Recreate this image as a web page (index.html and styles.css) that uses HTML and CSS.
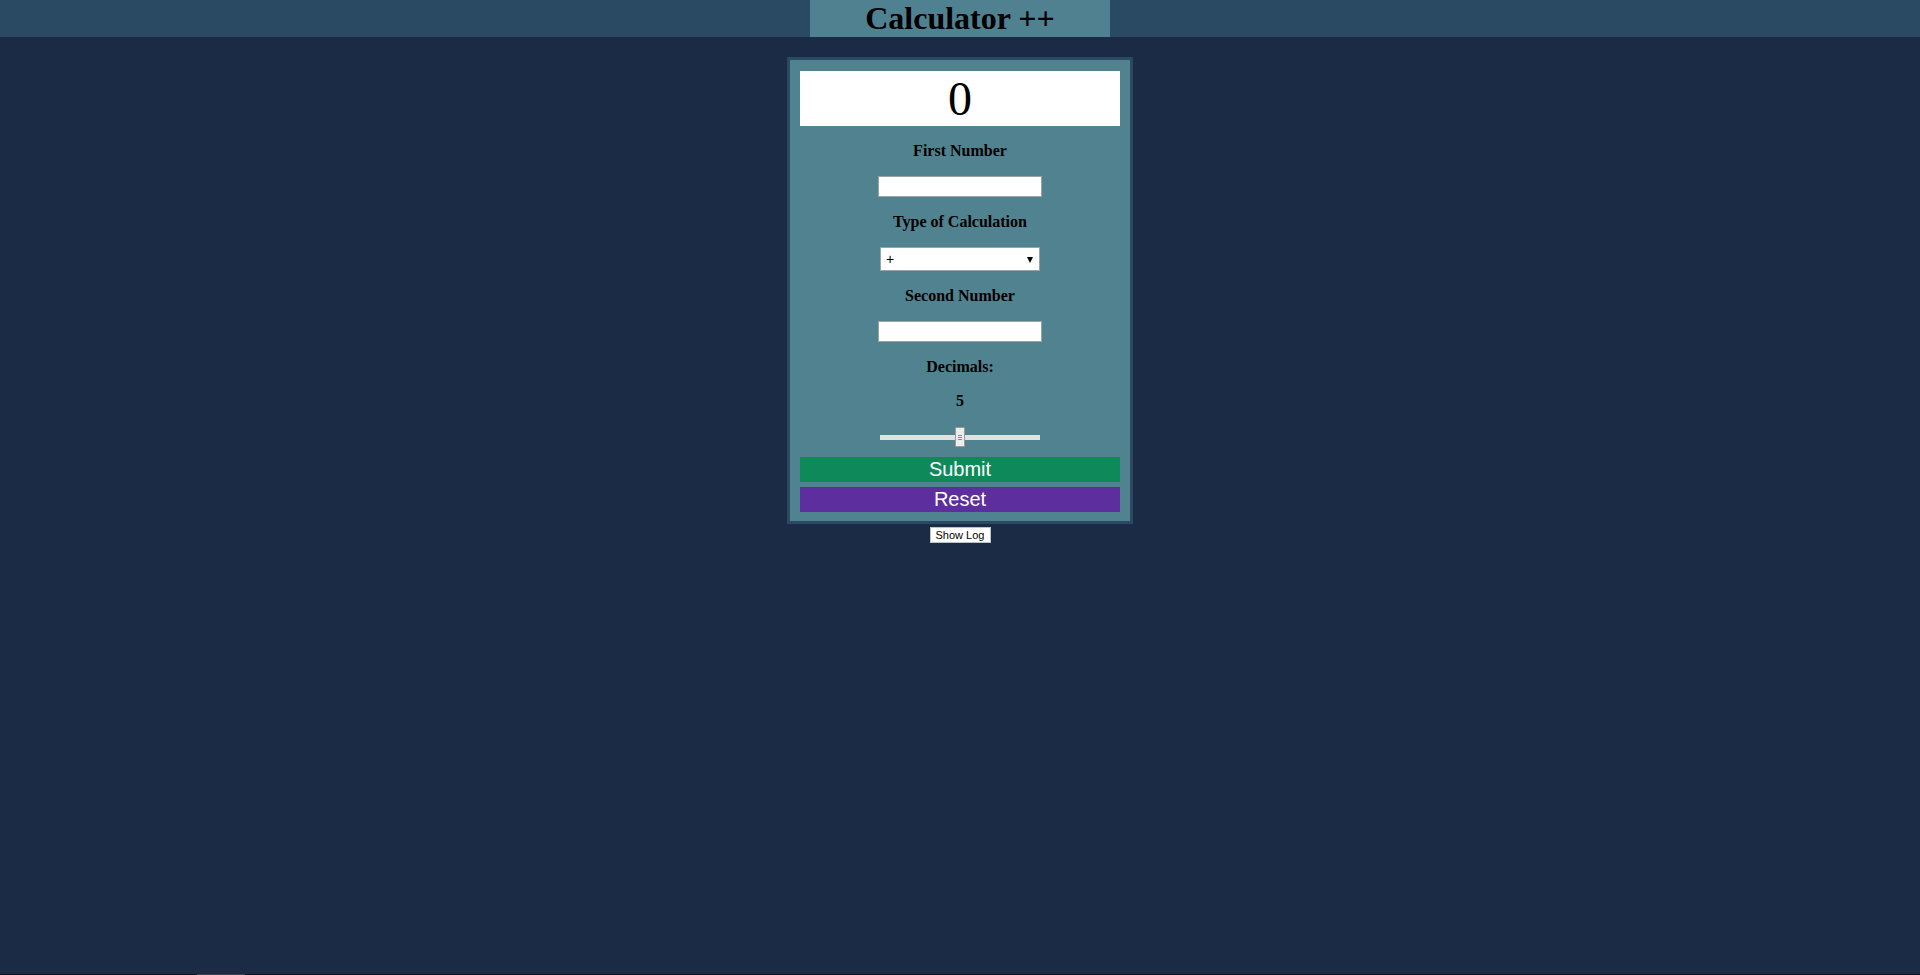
FILE: index.html
```html
<!DOCTYPE html>
<html>
<head>
<meta charset="utf-8">
<title>Calculator ++</title>
<link rel="stylesheet" href="styles.css">
</head>
<body>
<header class="topbar">
  <h1 class="title">Calculator ++</h1>
</header>
<main class="page">
  <section class="calc">
    <div class="display">0</div>
    <p class="label">First Number</p>
    <input class="num-input" type="text">
    <p class="label">Type of Calculation</p>
    <span class="select-wrap">
      <select class="op-select">
        <option>+</option>
        <option>-</option>
        <option>*</option>
        <option>/</option>
      </select>
    </span>
    <p class="label">Second Number</p>
    <input class="num-input" type="text">
    <p class="label">Decimals:</p>
    <p class="label">5</p>
    <input class="slider" type="range" min="0" max="10" value="5">
    <button class="btn btn-submit">Submit</button>
    <button class="btn btn-reset">Reset</button>
  </section>
  <button class="log-btn">Show Log</button>
</main>
<div class="bottom-strip"><span class="strip-thumb"></span></div>
</body>
</html>
```

FILE: styles.css
```css
html, body {
  margin: 0;
  padding: 0;
  height: 100%;
}
body {
  background: #1c2b45;
  font-family: "Liberation Serif", "Times New Roman", serif;
  color: #000;
}
.topbar {
  background: #2a4a63;
  display: flex;
  justify-content: center;
}
.title {
  margin: 0;
  width: 300px;
  height: 37px;
  background: #4f8190;
  font-size: 32px;
  line-height: 37px;
  text-align: center;
  font-weight: bold;
}
.page {
  display: flex;
  flex-direction: column;
  align-items: center;
  padding-top: 20px;
}
.calc {
  display: block;
  width: 320px;
  background: #50838f;
  border: 3px solid #2a4a63;
  padding: 11px 10px 9px;
}
.display {
  width: 320px;
  height: 55px;
  background: #fff;
  font-size: 48px;
  line-height: 55px;
  text-align: center;
}
.label {
  margin: 16px 0;
  font-size: 16px;
  font-weight: bold;
  line-height: 18px;
  text-align: center;
}
.num-input {
  display: block;
  box-sizing: border-box;
  width: 164px;
  height: 21px;
  margin: 0 auto;
  border: 1px solid #9aa3a8;
  background: #fff;
  padding: 1px 3px;
  font-family: "Liberation Sans", Arial, sans-serif;
  font-size: 13px;
}
.select-wrap {
  position: relative;
  display: block;
  width: 160px;
  height: 24px;
  margin: 0 auto;
}
.select-wrap::after {
  content: "";
  position: absolute;
  right: 7px;
  top: 10px;
  border-left: 3px solid transparent;
  border-right: 3px solid transparent;
  border-top: 6px solid #000;
  pointer-events: none;
}
.op-select {
  -webkit-appearance: none;
  appearance: none;
  display: block;
  box-sizing: border-box;
  width: 160px;
  height: 24px;
  margin: 0;
  border: 1px solid #9aa3a8;
  border-radius: 0;
  background: #fff;
  padding: 0 5px;
  font-family: "Liberation Sans", Arial, sans-serif;
  font-size: 14px;
  color: #000;
}
.slider {
  -webkit-appearance: none;
  appearance: none;
  display: block;
  width: 160px;
  height: 20px;
  margin: 17px auto 10px;
  padding: 0;
  background: transparent;
}
.slider::-webkit-slider-runnable-track {
  height: 5px;
  background: #e2e2e2;
}
.slider::-webkit-slider-thumb {
  -webkit-appearance: none;
  appearance: none;
  box-sizing: border-box;
  width: 10px;
  height: 20px;
  margin-top: -8px;
  border: 1px solid #9a9a9a;
  border-radius: 1px;
  background:
    linear-gradient(#8a8a8a, #8a8a8a) center 7px / 4px 1px no-repeat,
    linear-gradient(#8a8a8a, #8a8a8a) center 9px / 4px 1px no-repeat,
    linear-gradient(#8a8a8a, #8a8a8a) center 11px / 4px 1px no-repeat,
    #ececec;
}
.btn {
  display: block;
  width: 320px;
  height: 25px;
  margin: 0;
  border: none;
  padding: 0;
  color: #fff;
  font-family: "Liberation Sans", Arial, sans-serif;
  font-size: 20px;
  line-height: 25px;
}
.btn-submit {
  background: #0e8a5a;
}
.btn-reset {
  background: #5d2f9e;
  margin-top: 5px;
}
.log-btn {
  margin-top: 3px;
  width: 61px;
  height: 16px;
  padding: 0;
  border: 1px solid #b9c4c8;
  background: #fff;
  font-family: "Liberation Sans", Arial, sans-serif;
  font-size: 11px;
  line-height: 14px;
  color: #000;
}
.bottom-strip {
  position: fixed;
  left: 0;
  right: 0;
  bottom: 0;
  height: 1px;
  background: #0b1220;
}
.strip-thumb {
  position: absolute;
  left: 197px;
  width: 48px;
  top: 0;
  height: 1px;
  background: #3a4350;
}
```
